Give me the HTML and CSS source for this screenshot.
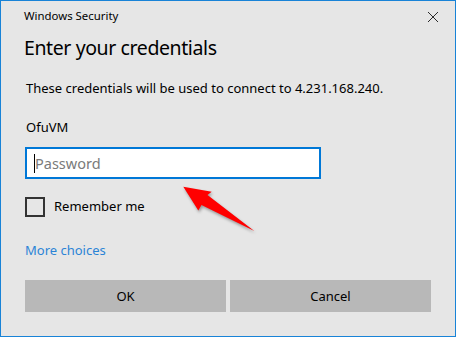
FILE: index.html
```html
<!DOCTYPE html>
<html lang="en">
<head>
<meta charset="utf-8">
<title>Windows Security</title>
<link rel="stylesheet" href="styles.css">
</head>
<body>
<div class="window">
  <div class="titlebar">
    <span class="title">Windows Security</span>
    <svg class="close" width="10" height="10" viewBox="0 0 10 10" aria-hidden="true">
      <path d="M0 0 L10 10 M10 0 L0 10" stroke="#2b2b2b" stroke-width="1" fill="none"/>
    </svg>
  </div>
  <h1 class="heading">Enter your credentials</h1>
  <p class="desc">These credentials will be used to connect to 4.231.168.240.</p>
  <div class="user">OfuVM</div>
  <div class="field"><span class="caret"></span><span class="placeholder">Password</span></div>
  <div class="remember">
    <span class="checkbox"></span>
    <span class="remember-label">Remember me</span>
  </div>
  <a class="more" href="#">More choices</a>
  <div class="buttons">
    <button class="btn">OK</button>
    <button class="btn">Cancel</button>
  </div>
  <svg class="arrow" width="456" height="337" viewBox="0 0 456 337" aria-hidden="true">
    <polygon points="183.3,186.7 211.7,191.7 207.5,195 254.3,231 201.5,205 198.3,210.5" fill="#ff0000"/>
  </svg>
</div>
</body>
</html>
```

FILE: styles.css
```css
* { box-sizing: border-box; }
html, body { margin: 0; padding: 0; }
body {
  width: 456px;
  height: 337px;
  font-family: "Segoe UI", "Noto Sans", sans-serif;
  color: #000;
  background: #e6e6e6;
}
.window {
  position: relative;
  width: 456px;
  height: 337px;
  border: 1px solid #1883d7;
  background: #e6e6e6;
  display: flex;
  flex-direction: column;
  padding: 0 24px 0 24px;
}
.titlebar {
  display: flex;
  align-items: flex-start;
  justify-content: space-between;
  margin: 0 -7px 0 -1px;
  padding-top: 7px;
  height: 23px;
}
.title {
  font-size: 11.4px;
  line-height: 16px;
  color: #000;
}
.close {
  display: block;
  margin-top: 4px;
}
.heading {
  margin: 10px 0 0 -1px;
  font-size: 19.5px;
  letter-spacing: -0.4px;
  line-height: 28px;
  font-weight: 400;
  color: #000;
}
.desc {
  margin: 17px 0 0 1px;
  font-size: 13px;
  line-height: 18px;
  color: #000;
}
.user {
  margin: 21px 0 0 1px;
  font-size: 13px;
  line-height: 18px;
}
.field {
  margin-top: 11px;
  width: 296px;
  height: 32px;
  border: 2px solid #0078d7;
  background: #fff;
  display: flex;
  align-items: center;
  padding-left: 7px;
}
.caret {
  width: 1px;
  height: 19px;
  background: #000;
}
.placeholder {
  font-size: 14.5px;
  line-height: 20px;
  color: #7a7a7a;
}
.remember {
  margin-top: 18px;
  display: flex;
  align-items: flex-start;
  height: 20px;
}
.checkbox {
  width: 20px;
  height: 20px;
  border: 2px solid #333;
}
.remember-label {
  margin: -1px 0 0 9px;
  font-size: 13px;
  line-height: 20px;
}
.more {
  margin-top: 24px;
  font-size: 13px;
  line-height: 18px;
  color: #2b84d6;
  text-decoration: none;
  align-self: flex-start;
}
.buttons {
  margin-top: 21px;
  display: grid;
  grid-template-columns: 1fr 1fr;
  gap: 4px;
}
.btn {
  height: 32px;
  border: 0;
  background: #b8b8b8;
  font-family: inherit;
  font-size: 13px;
  color: #000;
  padding: 0;
}
.arrow {
  position: absolute;
  left: -1px;
  top: -1px;
  pointer-events: none;
  filter: drop-shadow(1px 2px 1.5px rgba(0, 0, 0, 0.35));
}
```
